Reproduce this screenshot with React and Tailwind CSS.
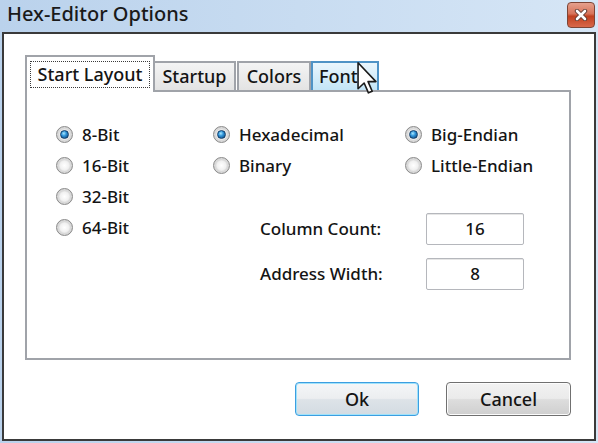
import { useState } from "react";

const font = { fontFamily: '"Noto Sans", "Open Sans", sans-serif' };

function Radio({ label, checked }) {
  return (
    <div className="flex h-[31px] items-center gap-[9px]">
      <span className="flex h-[17px] w-[17px] shrink-0 items-center justify-center rounded-full border border-[#8a8a8a] bg-[radial-gradient(circle,#ffffff_0%,#f1f1f1_40%,#d0d0d0_70%,#b9b9b9_100%)] shadow-[inset_0_0_0_2px_#d9d9d9]">
        {checked && (
          <span className="h-[9px] w-[9px] rounded-full border border-[#123f6b] bg-[radial-gradient(circle_at_40%_35%,#a8e8ff_0%,#2f94da_40%,#0c3a6a_100%)]" />
        )}
      </span>
      <span className="text-[17px] font-medium leading-none text-[#141414]">{label}</span>
    </div>
  );
}

function Field({ label, value, className = "" }) {
  return (
    <div className={"flex items-center pl-[47px] " + className}>
      <span className="w-[166px] text-[17px] font-medium text-[#141414]">{label}</span>
      <div className="flex h-[32px] w-[98px] items-center justify-center rounded-[2px] border border-[#b5b7bc] bg-white text-[17px] font-medium text-[#141414] shadow-[inset_0_1px_0_#e6e6e6]">
        {value}
      </div>
    </div>
  );
}

function Cursor() {
  return (
    <svg className="absolute left-[43px] top-[-2px] z-20" width="22" height="34" viewBox="0 0 12 19">
      <path
        d="M1 1 L1 15.5 L4.4 12.3 L6.8 17.8 L8.9 16.9 L6.6 11.5 L11 11.5 Z"
        fill="#ffffff"
        stroke="#1a1a1a"
        strokeWidth="0.9"
        strokeLinejoin="round"
      />
    </svg>
  );
}

export default function App() {
  const [tab] = useState("Start Layout");

  return (
    <div
      style={font}
      className="flex h-[443px] w-[598px] flex-col overflow-hidden bg-[linear-gradient(90deg,#bad2ec,#d6e6f6)]"
    >
      {/* title bar */}
      <div className="flex h-[32px] shrink-0 items-start">
        <span className="pl-[7px] text-[20px] font-medium leading-[28px] text-[#1a1a1a]">Hex-Editor Options</span>
        <button className="ml-auto mr-[3px] mt-[2px] flex h-[26px] w-[28px] items-center justify-center rounded-[4px] border border-[#7d4536] bg-[linear-gradient(#e5a08d_0%,#d7745a_45%,#c0401f_55%,#d8684a_100%)]">
          <svg width="14" height="12" viewBox="0 0 14 12">
            <path d="M3 2 L11 10 M11 2 L3 10" stroke="#5b3a32" strokeWidth="4.4" strokeLinecap="round" />
            <path d="M3 2 L11 10 M11 2 L3 10" stroke="#ffffff" strokeWidth="2.6" strokeLinecap="round" />
          </svg>
        </button>
      </div>

      {/* dialog body */}
      <div className="mx-[2px] h-[409px] border-2 border-[#3a3a3a] bg-white pl-[21px] pt-[21px]">
        {/* tab strip */}
        <div className="flex h-[35px] items-end">
          <div className="relative z-10 -mb-[2px] flex h-[37px] w-[130px] items-stretch border-2 border-b-0 border-[#a0a3a9] bg-white px-[3px] pb-[4px] pt-[4px]">
            <div className="flex w-full items-center justify-center border border-dotted border-[#3a3a3a] text-[18px] font-medium text-[#141414]">
              {tab}
            </div>
          </div>
          <div className="flex h-[29px] w-[81px] items-center justify-center border-2 border-b-0 border-l-0 border-[#a0a3a9] bg-[linear-gradient(#f4f4f4,#e3e3e3)] text-[18px] font-medium text-[#141414]">
            Startup
          </div>
          <div className="ml-[1px] flex h-[29px] w-[74px] items-center justify-center border-2 border-b-0 border-[#a0a3a9] bg-[linear-gradient(#f4f4f4,#e3e3e3)] text-[18px] font-medium text-[#141414]">
            Colors
          </div>
          <div className="relative flex h-[29px] w-[68px] items-center justify-start border-2 border-b-0 border-[#4f93c6] bg-[linear-gradient(#eaf6fd,#c3e5f7)] pl-[6px] text-[18px] font-medium text-[#141414]">
            Font
            <Cursor />
          </div>
        </div>

        {/* tab panel */}
        <div className="flex h-[270px] w-[546px] border-2 border-[#a0a3a9] pl-[29px] pt-[27px]">
          <div className="w-[157px]">
            <Radio label="8-Bit" checked />
            <Radio label="16-Bit" />
            <Radio label="32-Bit" />
            <Radio label="64-Bit" />
          </div>
          <div className="flex flex-col">
            <div className="flex">
              <div className="w-[192px]">
                <Radio label="Hexadecimal" checked />
                <Radio label="Binary" />
              </div>
              <div>
                <Radio label="Big-Endian" checked />
                <Radio label="Little-Endian" />
              </div>
            </div>
            <Field label="Column Count:" value="16" className="mt-[32px]" />
            <Field label="Address Width:" value="8" className="mt-[13px]" />
          </div>
        </div>

        {/* buttons */}
        <div className="mt-[22px] flex w-[546px] justify-end gap-[27px]">
          <button className="h-[34px] w-[124px] rounded-[4px] border border-[#3c9ee0] bg-[linear-gradient(#f4f6f8_0%,#eceef0_48%,#dde3e8_52%,#d3dbe2_100%)] text-[18px] font-medium text-[#141414] shadow-[inset_0_0_0_1px_#9fe2fb]">
            Ok
          </button>
          <button className="h-[34px] w-[125px] rounded-[4px] border border-[#707070] bg-[linear-gradient(#f2f2f2_0%,#ebebeb_48%,#dddddd_52%,#cfcfcf_100%)] text-[18px] font-medium text-[#141414] shadow-[inset_0_0_0_1px_#fcfcfc]">
            Cancel
          </button>
        </div>
      </div>
    </div>
  );
}
